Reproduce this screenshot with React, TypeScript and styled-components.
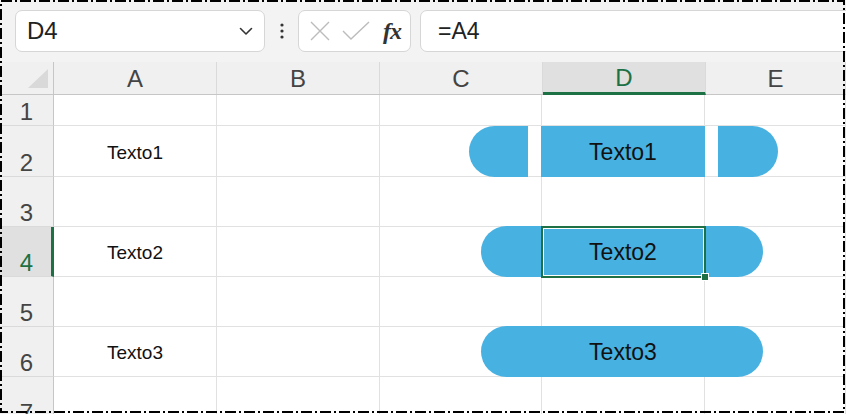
import { createGlobalStyle, styled } from "styled-components";

const GlobalStyle = createGlobalStyle`
  html, body {
    margin: 0;
    padding: 0;
    background: #fff;
    overflow: hidden;
  }
  body {
    font-family: "Liberation Sans", Arial, sans-serif;
  }
`;

const GREEN = "#1e7145";
const PILL = "#47b1e1";

const columns = ["A", "B", "C", "D", "E"];
const rows = [
  { n: 1, h: 31, text: "" },
  { n: 2, h: 51, text: "Texto1" },
  { n: 3, h: 50, text: "" },
  { n: 4, h: 50, text: "Texto2" },
  { n: 5, h: 50, text: "" },
  { n: 6, h: 50, text: "Texto3" },
  { n: 7, h: 50, text: "" },
];

function App() {
  return (
    <>
      <GlobalStyle />
      <Frame>
        <Toolbar>
          <NameBox>
            <NameText>D4</NameText>
            <svg width="16" height="16" viewBox="0 0 16 16">
              <path
                d="M2.5 5.5 L8 11 L13.5 5.5"
                fill="none"
                stroke="#333"
                strokeWidth="1.6"
                strokeLinecap="round"
                strokeLinejoin="round"
              />
            </svg>
          </NameBox>
          <Dots>
            <svg width="4" height="16" viewBox="0 0 4 16">
              <circle cx="2" cy="2" r="1.6" fill="#333" />
              <circle cx="2" cy="8" r="1.6" fill="#333" />
              <circle cx="2" cy="14" r="1.6" fill="#333" />
            </svg>
          </Dots>
          <FxBox>
            <svg width="22" height="22" viewBox="0 0 22 22">
              <path
                d="M2 2 L20 20 M20 2 L2 20"
                stroke="#bcbcbc"
                strokeWidth="1.4"
                fill="none"
              />
            </svg>
            <svg width="28" height="20" viewBox="0 0 28 20">
              <path
                d="M1 10 L9 18 L27 1"
                stroke="#bcbcbc"
                strokeWidth="1.4"
                fill="none"
              />
            </svg>
            <Fx>fx</Fx>
          </FxBox>
          <FormulaBox>=A4</FormulaBox>
        </Toolbar>

        <Sheet>
          <HeaderRow>
            <Corner>
              <svg width="22" height="20" viewBox="0 0 22 20">
                <polygon points="21,0 21,19 1,19" fill="#d9d9d9" />
              </svg>
            </Corner>
            {columns.map((c) => (
              <ColHead key={c} $active={c === "D"} $last={c === "E"}>
                {c}
              </ColHead>
            ))}
          </HeaderRow>
          {rows.map((r) => (
            <Row key={r.n} style={{ height: r.h }}>
              <RowHead $active={r.n === 4}>{r.n}</RowHead>
              {columns.map((c) => (
                <Cell key={c} $last={c === "E"}>
                  {c === "A" ? r.text : ""}
                </Cell>
              ))}
            </Row>
          ))}

          <Shape $top={64} $left={469}>
            <Segment $w={59} $round="left" />
            <Segment $w={164}>Texto1</Segment>
            <Segment $w={60} $round="right" />
          </Shape>
          <Shape $top={164} $left={481}>
            <Pill $w={282}>Texto2</Pill>
          </Shape>
          <Shape $top={264} $left={481}>
            <Pill $w={282}>Texto3</Pill>
          </Shape>

          <Selection>
            <FillHandle />
          </Selection>
        </Sheet>

        <DashBorder width="846" height="414" viewBox="0 0 846 414">
          <rect
            x="1"
            y="1"
            width="843"
            height="411"
            fill="none"
            stroke="#000"
            strokeWidth="2"
            strokeDasharray="11 3 2 3"
          />
        </DashBorder>
      </Frame>
    </>
  );
}

export default App;

const Frame = styled.div`
  position: relative;
  width: 846px;
  height: 414px;
  overflow: hidden;
  background: #fff;
`;

const Toolbar = styled.div`
  height: 62px;
  background: #f3f3f3;
  display: flex;
  align-items: center;
  padding-left: 15px;
  box-sizing: border-box;
`;

const Box = styled.div`
  height: 42px;
  flex-shrink: 0;
  box-sizing: border-box;
  background: #fff;
  border: 1px solid #d6d6d6;
  border-radius: 7px;
  display: flex;
  align-items: center;
`;

const NameBox = styled(Box)`
  width: 250px;
  padding: 0 10px 0 11px;
  justify-content: space-between;
`;

const NameText = styled.span`
  font-size: 24px;
  color: #222;
`;

const Dots = styled.div`
  width: 33px;
  flex-shrink: 0;
  display: flex;
  justify-content: center;
  align-items: center;
`;

const FxBox = styled(Box)`
  width: 113px;
  padding: 0 6px 0 10px;
  gap: 11px;
`;

const Fx = styled.span`
  font-family: "Liberation Serif", "Times New Roman", serif;
  font-style: italic;
  font-weight: bold;
  font-size: 24px;
  color: #333;
  margin-left: 2px;
  letter-spacing: -1px;
`;

const FormulaBox = styled(Box)`
  margin-left: 9px;
  width: 460px;
  padding-left: 17px;
  font-size: 23px;
  color: #222;
`;

const Sheet = styled.div`
  position: relative;
`;

const HeaderRow = styled.div`
  display: flex;
  height: 33px;
  background: #f0f0f0;
  border-bottom: 1px solid #c6c6c6;
  box-sizing: border-box;
`;

const Corner = styled.div`
  width: 54px;
  flex-shrink: 0;
  box-sizing: border-box;
  border-right: 1px solid #c6c6c6;
  display: flex;
  justify-content: flex-end;
  align-items: flex-end;
  padding: 0 4px 5px 0;
`;

const colWidth = (last?: boolean) => (last ? "auto" : "163px");

const ColHead = styled.div<{ $active?: boolean; $last?: boolean }>`
  width: ${(p) => colWidth(p.$last)};
  flex: ${(p) => (p.$last ? "1" : "0 0 auto")};
  box-sizing: border-box;
  border-right: 1px solid #dadada;
  display: flex;
  justify-content: center;
  align-items: center;
  padding-top: 2px;
  font-size: 24px;
  color: ${(p) => (p.$active ? GREEN : "#444")};
  background: ${(p) => (p.$active ? "#e0e0e0" : "transparent")};
  border-bottom: ${(p) => (p.$active ? `3px solid ${GREEN}` : "none")};
  margin-bottom: ${(p) => (p.$active ? "-1px" : "0")};
`;

const Row = styled.div`
  display: flex;
  box-sizing: border-box;
`;

const RowHead = styled.div<{ $active?: boolean }>`
  width: 54px;
  flex-shrink: 0;
  box-sizing: border-box;
  background: ${(p) => (p.$active ? "#e0e0e0" : "#f0f0f0")};
  border-right: ${(p) =>
    p.$active ? `3px solid ${GREEN}` : "1px solid #c6c6c6"};
  border-bottom: 1px solid #dadada;
  display: flex;
  justify-content: center;
  align-items: flex-end;
  padding: 0 0 0 ${(p) => (p.$active ? "2px" : "0")};
  font-size: 24px;
  line-height: 26px;
  color: ${(p) => (p.$active ? GREEN : "#444")};
`;

const Cell = styled.div<{ $last?: boolean }>`
  width: ${(p) => colWidth(p.$last)};
  flex: ${(p) => (p.$last ? "1" : "0 0 auto")};
  box-sizing: border-box;
  border-right: 1px solid #e1e1e1;
  border-bottom: 1px solid #e1e1e1;
  display: flex;
  justify-content: center;
  align-items: center;
  padding-top: 3px;
  font-size: 19px;
  color: #111;
  &:nth-child(4) {
    width: 162px;
  }
`;

const Shape = styled.div<{ $top: number; $left: number }>`
  position: absolute;
  top: ${(p) => p.$top}px;
  left: ${(p) => p.$left}px;
  height: 51px;
  display: flex;
  gap: 13px;
`;

const Segment = styled.div<{ $w: number; $round?: "left" | "right" }>`
  width: ${(p) => p.$w}px;
  height: 100%;
  background: ${PILL};
  border-radius: ${(p) =>
    p.$round === "left"
      ? "26px 0 0 26px"
      : p.$round === "right"
      ? "0 26px 26px 0"
      : "0"};
  display: flex;
  justify-content: center;
  align-items: center;
  padding-top: 2px;
  box-sizing: border-box;
  font-size: 23px;
  color: #111;
`;

const Pill = styled.div<{ $w: number }>`
  width: ${(p) => p.$w}px;
  height: 100%;
  background: ${PILL};
  border-radius: 26px;
  display: flex;
  justify-content: center;
  align-items: center;
  font-size: 23px;
  color: #111;
  padding: 2px 0 0 2px;
  box-sizing: border-box;
`;

const Selection = styled.div`
  position: absolute;
  top: 164px;
  left: 541px;
  width: 165px;
  height: 52px;
  box-sizing: border-box;
  border: 2px solid ${GREEN};
  box-shadow: inset 0 0 0 1px #fff;
`;

const FillHandle = styled.div`
  position: absolute;
  right: -5px;
  bottom: -5px;
  width: 6px;
  height: 6px;
  background: ${GREEN};
  border: 1px solid #fff;
`;

const DashBorder = styled.svg`
  position: absolute;
  inset: 0;
  pointer-events: none;
`;
